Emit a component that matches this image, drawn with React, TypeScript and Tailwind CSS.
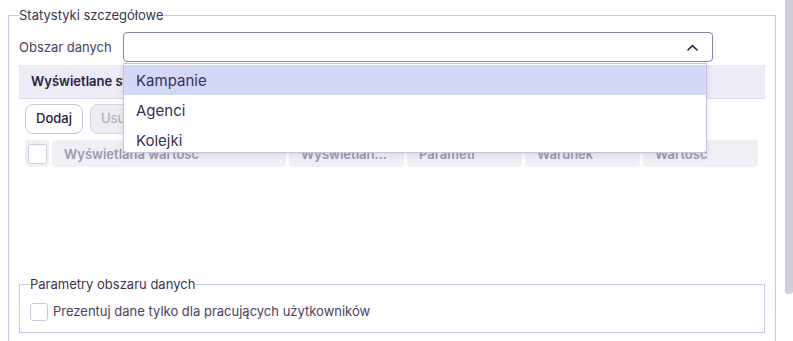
import React from 'react';

const font = "font-['Inter','Noto_Sans',sans-serif]";

const columns = ['Wyświetlana wartość', 'Wyświetlana nazwa', 'Parametr', 'Warunek', 'Wartość'];
const options = ['Kampanie', 'Agenci', 'Kolejki'];

export default function App() {
  return (
    <div className={`relative w-[793px] h-[341px] overflow-hidden bg-white ${font}`}>
      {/* scrollbar */}
      <div className="absolute right-0 top-0 w-[8px] h-[294px] bg-[#cecdd8] rounded-b-[3px]" />

      <div className="pl-[8px] pt-[7px] w-[776px]">
        <fieldset className="border border-[#c9c6df] px-[10px] pb-[6px] h-[360px]">
          <legend className="text-[13px] leading-[16px] text-[#3b3350]">Statystyki szczegółowe</legend>

          {/* data area select */}
          <div className="relative flex items-center mt-[9px]">
            <label className="w-[104px] pt-[1px] text-[13px] text-[#4a4160]">Obszar danych</label>
            <div className="w-[590px] h-[30px] border border-[#8c83a3] rounded-[4px] flex items-center justify-end pr-[14px]">
              <svg width="11" height="7" viewBox="0 0 11 7" fill="none">
                <path d="M1 6L5.5 1.5L10 6" stroke="#2a1f45" strokeWidth="1.6" strokeLinecap="round" strokeLinejoin="round" />
              </svg>
            </div>

            {/* open dropdown */}
            <div className="absolute left-[104px] top-[31px] z-10 w-[584px] h-[90px] overflow-hidden bg-white border border-[#c5c1da] rounded-b-[4px] shadow-[0_2px_6px_rgba(60,50,100,0.12)] pt-[1px]">
              {options.map((o, i) => (
                <div
                  key={o}
                  className={`h-[30px] shrink-0 flex items-center pl-[12px] pt-[3px] text-[15px] text-[#3a2f55] ${i === 0 ? 'bg-[#d4d8f7]' : ''}`}
                >
                  {o}
                </div>
              ))}
            </div>
          </div>

          {/* displayed statistics */}
          <div className="mt-[3px] w-[746px]">
            <div className="h-[34px] bg-[#ecebf6] border-b border-[#d9d7ea] flex items-center pl-[12px] text-[13px] font-semibold text-[#2a2040]">
              Wyświetlane statystyki
            </div>
            <div className="flex gap-[7px] pl-[6px] mt-[5px]">
              <button className="h-[30px] px-[10px] rounded-[8px] border border-[#c9c5dc] bg-white text-[13px] font-medium text-[#2a2040]">
                Dodaj
              </button>
              <button className="h-[30px] px-[10px] rounded-[8px] border border-[#d6d3e0] bg-[#eeedf3] text-[13px] font-medium text-[#b3aec3]">
                Usuń
              </button>
            </div>
            <div className="flex gap-[3px] pl-[6px] mt-[6px]">
              <div className="w-[24px] h-[27px] bg-[#f0eff6] rounded-[4px] flex items-center justify-center">
                <div className="w-[19px] h-[20px] bg-white border border-[#cfcce0] rounded-[2px]" />
              </div>
              {columns.map((c, i) => (
                <div
                  key={c}
                  className={`${i === 0 ? 'w-[234px]' : 'w-[115px]'} h-[27px] bg-[#f0eff6] rounded-[4px] flex items-center px-[12px] pt-[2px] text-[13px] font-semibold text-[#9c97b0]`}
                >
                  <span className="truncate">{c}</span>
                </div>
              ))}
            </div>
          </div>

          {/* data area parameters */}
          <fieldset className="mt-[109px] w-[746px] border border-[#c9c6df] px-[10px] pb-[10px]">
            <legend className="text-[13px] leading-[16px] text-[#3b3350]">Parametry obszaru danych</legend>
            <label className="flex items-center gap-[5px] mt-[10px]">
              <span className="w-[18px] h-[18px] border border-[#c9c6dc] rounded-[3px] bg-white" />
              <span className="text-[13px] text-[#4a4160]">Prezentuj dane tylko dla pracujących użytkowników</span>
            </label>
          </fieldset>
        </fieldset>
      </div>
    </div>
  );
}
